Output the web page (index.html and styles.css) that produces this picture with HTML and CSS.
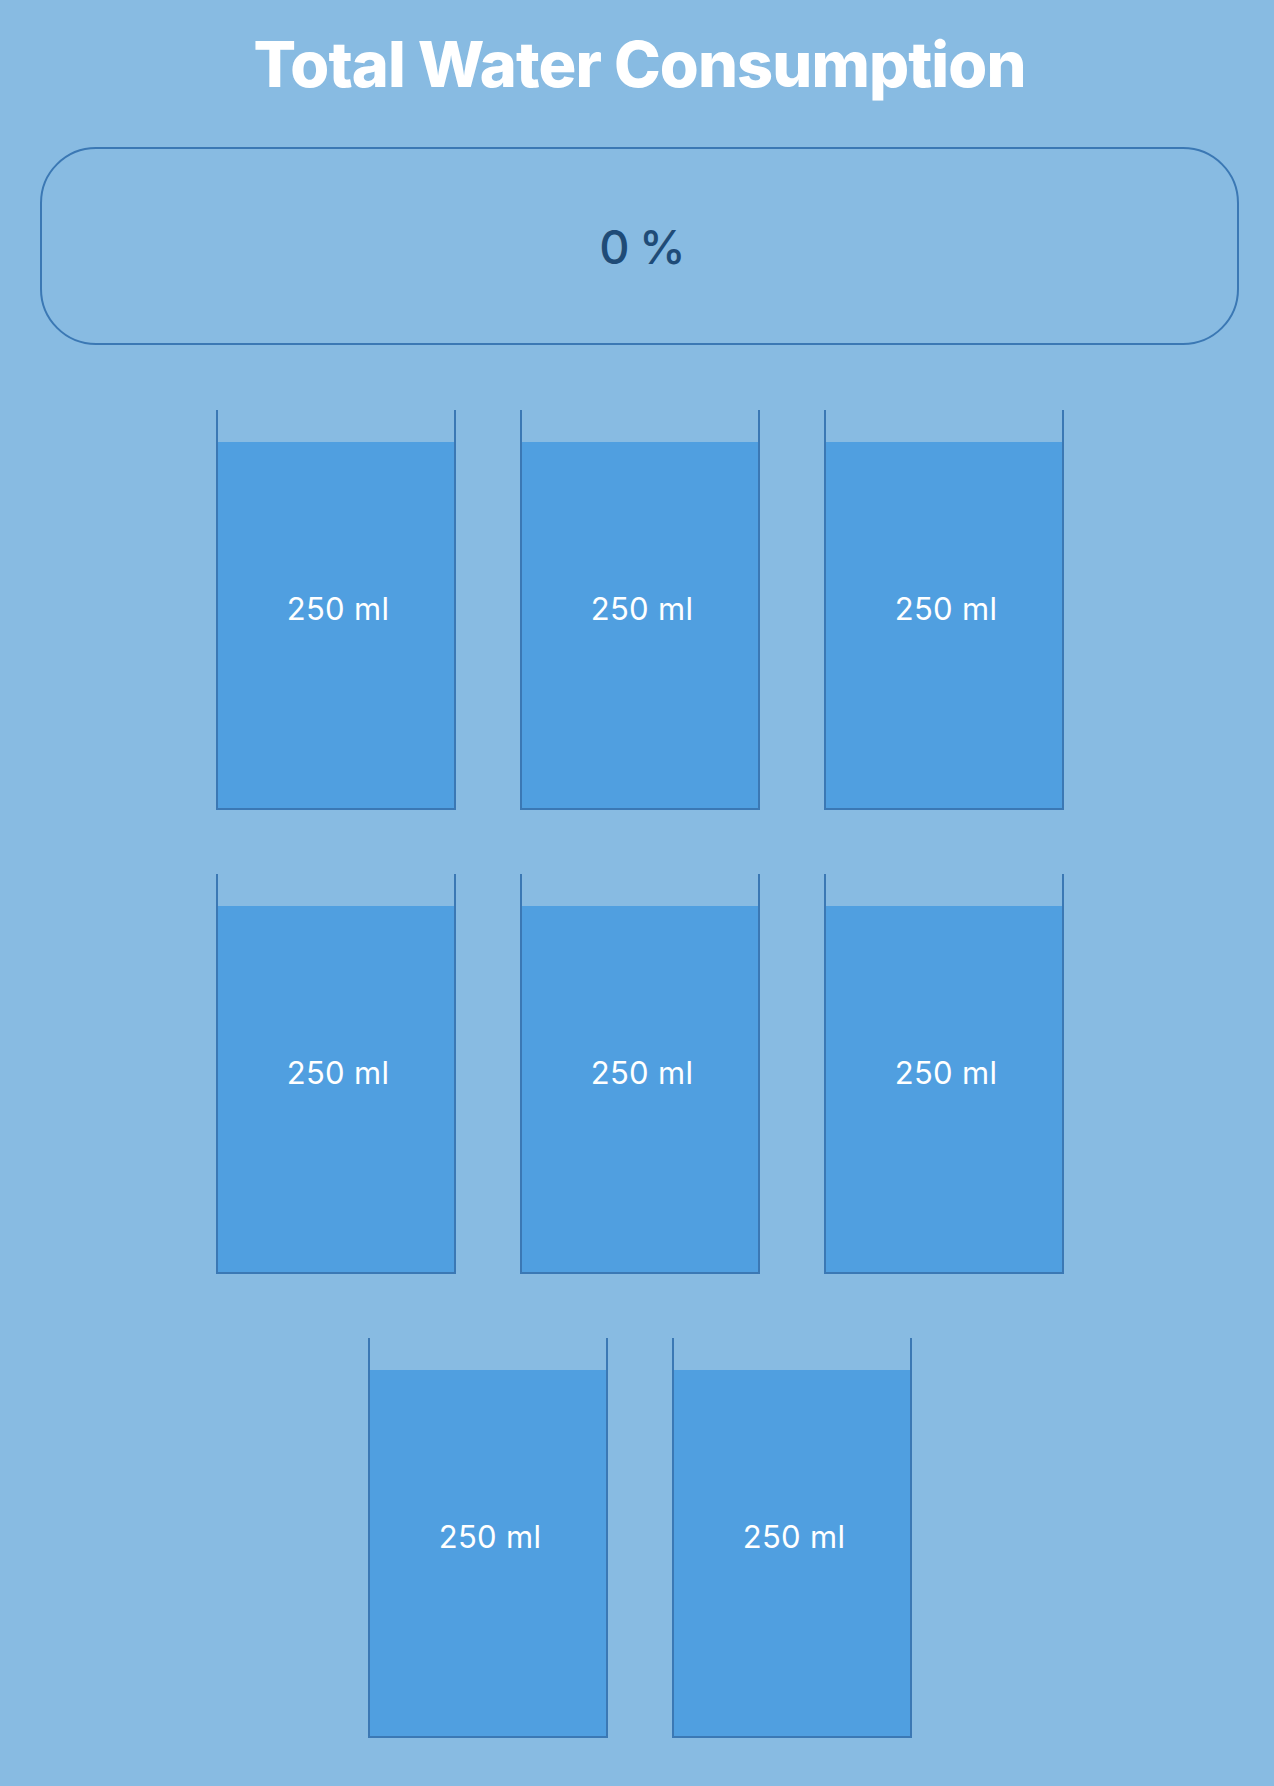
FILE: index.html
```html
<!DOCTYPE html>
<html lang="en">
<head>
<meta charset="utf-8">
<title>Total Water Consumption</title>
<link rel="stylesheet" href="styles.css">
</head>
<body>
<main class="page">
  <h1 class="title">Total Water Consumption</h1>
  <div class="total">
    <span class="total-value">0 %</span>
  </div>
  <div class="cups">
    <div class="cup"><span class="cup-label">250 ml</span></div>
    <div class="cup"><span class="cup-label">250 ml</span></div>
    <div class="cup"><span class="cup-label">250 ml</span></div>
    <div class="cup"><span class="cup-label">250 ml</span></div>
    <div class="cup"><span class="cup-label">250 ml</span></div>
    <div class="cup"><span class="cup-label">250 ml</span></div>
    <div class="cup"><span class="cup-label">250 ml</span></div>
    <div class="cup"><span class="cup-label">250 ml</span></div>
  </div>
</main>
</body>
</html>
```

FILE: styles.css
```css
* {
  box-sizing: border-box;
}

html, body {
  margin: 0;
  padding: 0;
}

body {
  background: #88bbe2;
  font-family: Inter, "Open Sans", "Liberation Sans", sans-serif;
  min-height: 1786px;
}

.page {
  width: 1199px;
  margin-left: 40px;
  padding-bottom: 48px;
  display: flex;
  flex-direction: column;
  align-items: stretch;
}

.title {
  margin: 24px 0 0 0;
  height: 80px;
  line-height: 80px;
  font-size: 63px;
  font-weight: 800;
  letter-spacing: -0.9px;
  color: #ffffff;
  text-align: center;
}

.total {
  margin-top: 43px;
  height: 198px;
  border: 2px solid #3b78b4;
  border-radius: 56px;
  display: flex;
  align-items: center;
  justify-content: center;
}

.total-value {
  font-size: 47px;
  font-weight: 500;
  word-spacing: -3px;
  padding-left: 6px;
  color: #1f4b77;
}

.cups {
  margin: 65px auto 0;
  width: 848px;
  display: flex;
  flex-wrap: wrap;
  justify-content: center;
  gap: 64px;
}

.cup {
  width: 240px;
  height: 400px;
  border: 2px solid #3b78b4;
  border-top: none;
  background: linear-gradient(to bottom, transparent 32px, #509fe0 32px);
  display: flex;
  align-items: center;
  justify-content: center;
}

.cup-label {
  font-size: 31px;
  font-weight: 400;
  letter-spacing: 0.3px;
  color: #ffffff;
  padding: 0 0 2px 5px;
}
```
